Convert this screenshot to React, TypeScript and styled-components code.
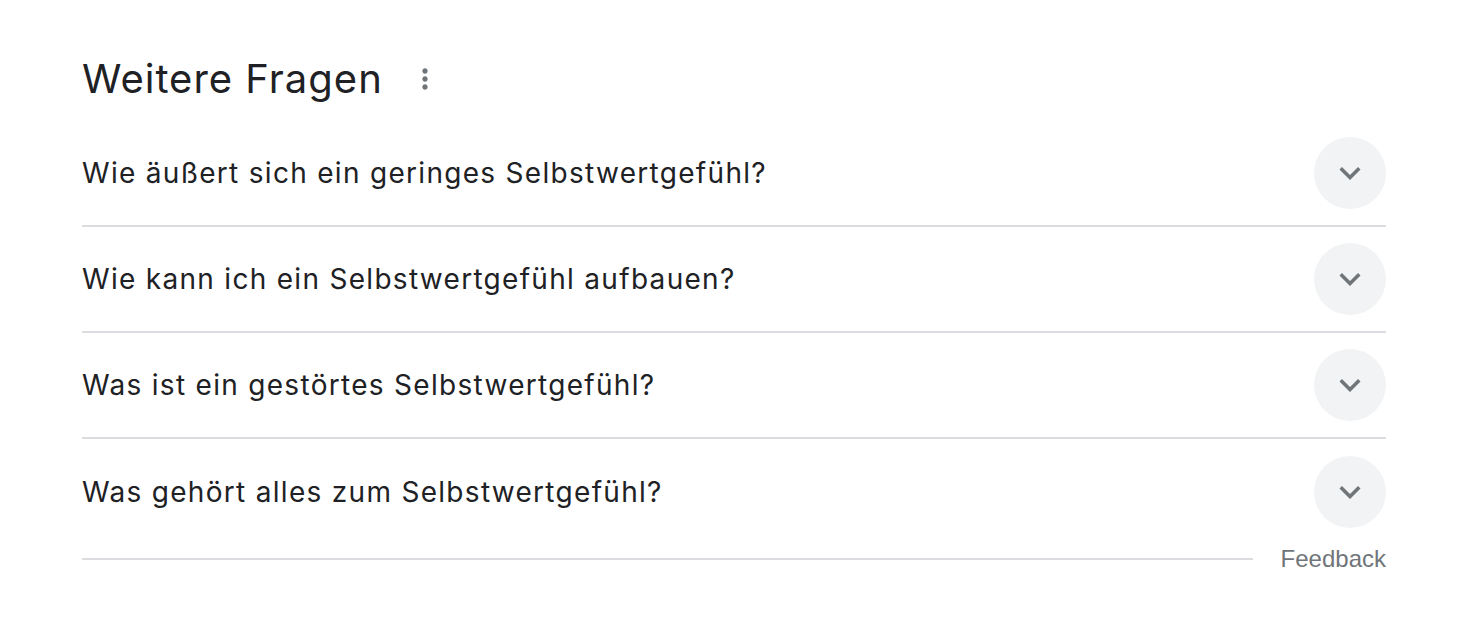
import React from "react";
import styled, { createGlobalStyle } from "styled-components";

const Global = createGlobalStyle`
  html, body { margin: 0; padding: 0; background: #ffffff; }
  body { font-family: Inter, Roboto, "Liberation Sans", Arial, sans-serif; }
`;

const Page = styled.div`
  width: 1472px;
  height: 630px;
  box-sizing: border-box;
  padding: 36px 86px 0 82px;
`;

const Header = styled.div`
  display: flex;
  align-items: center;
  height: 85px;
`;

const Title = styled.h2`
  margin: 0;
  font-family: Inter, Roboto, "Liberation Sans", Arial, sans-serif;
  font-weight: 400;
  font-size: 40px;
  letter-spacing: 1px;
  color: #202124;
  line-height: 1;
`;

const MenuButton = styled.button`
  border: 0;
  background: transparent;
  padding: 0;
  margin-left: 26px;
  width: 32px;
  height: 32px;
  display: flex;
  align-items: center;
  justify-content: center;
  color: #70757a;
`;

const Row = styled.div<{ $last?: boolean }>`
  display: flex;
  align-items: center;
  justify-content: space-between;
  height: ${(p) => (p.$last ? "106px" : "104px")};
  border-bottom: ${(p) => (p.$last ? "0" : "2px solid #dadce0")};
`;

const Question = styled.span`
  font-family: Inter, Roboto, "Liberation Sans", Arial, sans-serif;
  font-size: 28px;
  letter-spacing: 1.3px;
  color: #202124;
`;

const Toggle = styled.div`
  width: 72px;
  height: 72px;
  border-radius: 50%;
  background: #f1f3f4;
  display: flex;
  align-items: center;
  justify-content: center;
  color: #70757a;
  flex-shrink: 0;
`;

const Footer = styled.div`
  display: flex;
  align-items: center;
  height: 28px;
  gap: 28px;
`;

const Line = styled.div`
  flex: 1;
  height: 2px;
  background: #dadce0;
`;

const FeedbackLink = styled.span`
  font-family: "Liberation Sans", Arial, sans-serif;
  font-size: 24px;
  color: #70757a;
`;

const Chevron = () => (
  <svg width="42" height="42" viewBox="0 0 24 24" fill="currentColor">
    <path d="M16.59 8.59L12 13.17 7.41 8.59 6 10l6 6 6-6z" />
  </svg>
);

const Dots = () => (
  <svg width="32" height="32" viewBox="0 0 24 24" fill="currentColor">
    <path d="M12 8c1.1 0 2-.9 2-2s-.9-2-2-2-2 .9-2 2 .9 2 2 2zm0 2c-1.1 0-2 .9-2 2s.9 2 2 2 2-.9 2-2-.9-2-2-2zm0 6c-1.1 0-2 .9-2 2s.9 2 2 2 2-.9 2-2-.9-2-2-2z" />
  </svg>
);

const questions = [
  "Wie äußert sich ein geringes Selbstwertgefühl?",
  "Wie kann ich ein Selbstwertgefühl aufbauen?",
  "Was ist ein gestörtes Selbstwertgefühl?",
  "Was gehört alles zum Selbstwertgefühl?",
];

export default function App() {
  return (
    <Page>
      <Global />
      <Header>
        <Title>Weitere Fragen</Title>
        <MenuButton aria-label="Optionen">
          <Dots />
        </MenuButton>
      </Header>
      {questions.map((q, i) => (
        <Row key={q} $last={i === questions.length - 1}>
          <Question>{q}</Question>
          <Toggle>
            <Chevron />
          </Toggle>
        </Row>
      ))}
      <Footer>
        <Line />
        <FeedbackLink>Feedback</FeedbackLink>
      </Footer>
    </Page>
  );
}
